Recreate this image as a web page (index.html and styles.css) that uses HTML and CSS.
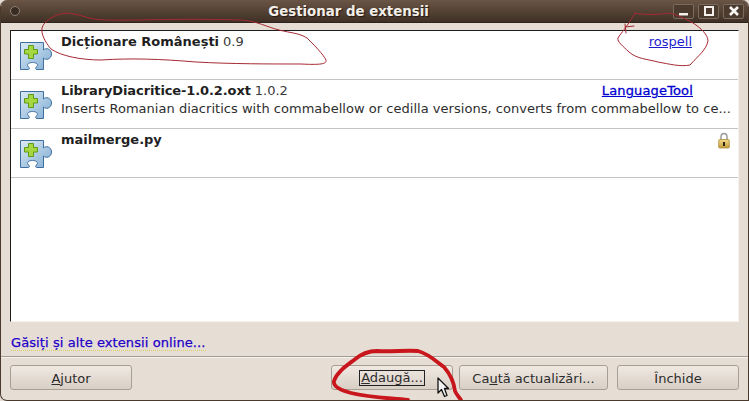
FILE: index.html
```html
<!DOCTYPE html>
<html lang="ro">
<head>
<meta charset="utf-8">
<title>Gestionar de extensii</title>
<link rel="stylesheet" href="styles.css">
</head>
<body>
<svg width="0" height="0" class="defs">
  <defs>
    <linearGradient id="pz" x1="0" y1="0" x2="1" y2="1">
      <stop offset="0" stop-color="#dcebf6"/>
      <stop offset="1" stop-color="#7fabd2"/>
    </linearGradient>
    <linearGradient id="lk" x1="0" y1="0" x2="0" y2="1">
      <stop offset="0" stop-color="#f2dc8a"/>
      <stop offset="1" stop-color="#c49a3a"/>
    </linearGradient>
    <symbol id="puzzle" viewBox="0 0 32 28">
      <path d="M.5 .5H23.500V8C25.500 5.500 31.500 6.500 31.500 12S25.500 18.500 23.500 16V27.500H16.500C15 27 15.500 25.500 17 24.500C18.500 22 16 20.500 12.500 20.500S6.500 22 8 24.500C9.500 25.500 10 27 8.500 27.500H.5Z" fill="url(#pz)" stroke="#3f6f9c" stroke-width="1"/>
      <path d="M8.500 3.500H13.500V7.500H17.500V12H13.500V16.500H8.500V12H4.500V7.500H8.500Z" fill="#a6d640" stroke="#5d9a18" stroke-width="1"/>
    </symbol>
  </defs>
</svg>
<div class="window">
  <header class="titlebar">
    <span class="wm-dot"></span>
    <h1 class="title">Gestionar de extensii</h1>
    <div class="wm-buttons">
      <span class="wm-btn"><svg width="12" height="12" viewBox="0 0 12 12"><rect x="1" y="8" width="9" height="2.500" fill="#f4f0ec"/></svg></span>
      <span class="wm-btn"><svg width="12" height="12" viewBox="0 0 12 12"><rect x="2" y="2" width="8" height="8" fill="none" stroke="#f4f0ec" stroke-width="2"/></svg></span>
      <span class="wm-btn"><svg width="12" height="12" viewBox="0 0 12 12"><path d="M2 2L10 10M10 2L2 10" stroke="#f8f6f2" stroke-width="2.600"/></svg></span>
    </div>
  </header>
  <main class="content">
    <div class="list">
      <div class="row">
        <svg class="puzzle"><use href="#puzzle"/></svg>
        <div class="info">
          <div class="line"><span class="name">Dicționare Românești</span> <span class="ver">0.9</span><a class="link link-plain" href="#">rospell</a></div>
        </div>
      </div>
      <div class="row">
        <svg class="puzzle"><use href="#puzzle"/></svg>
        <div class="info">
          <div class="line"><span class="name name-tight">LibraryDiacritice-1.0.2.oxt</span> <span class="ver">1.0.2</span><a class="link link-strong" href="#">LanguageTool</a></div>
          <div class="desc">Inserts Romanian diacritics with commabellow or cedilla versions, converts from commabellow to ce...</div>
        </div>
      </div>
      <div class="row">
        <svg class="puzzle"><use href="#puzzle"/></svg>
        <div class="info">
          <div class="line"><span class="name">mailmerge.py</span>
            <svg class="lock" width="12" height="17" viewBox="0 0 12 17">
              <path d="M3 8V5A3 3.500 0 0 1 9 5V8" fill="none" stroke="#9a9a98" stroke-width="1.500"/>
              <rect x=".7" y="7.500" width="10.600" height="8.500" rx="1" fill="url(#lk)" stroke="#a8842e" stroke-width=".7"/>
              <rect x="5" y="10" width="2" height="4" fill="#2a2416"/>
            </svg>
          </div>
        </div>
      </div>
    </div>
    <a class="online" href="#">Găsiți și alte extensii online...</a>
    <div class="divider"></div>
    <div class="buttons">
      <button class="btn btn-help"><u>A</u>jutor</button>
      <span class="spacer"></span>
      <button class="btn btn-add"><span class="focus"><u>A</u>daugă...</span></button>
      <button class="btn btn-update">Ca<u>u</u>tă actualizări...</button>
      <button class="btn btn-close">Închide</button>
    </div>
  </main>
  <svg class="ink" width="749" height="401" viewBox="0 0 749 401" fill="none" stroke-linejoin="round" stroke-linecap="round">
    <path class="thin" d="M64 13C72 13 78 15 88 18C100 21 120 20 140 20C170 19 210 19 240 20C256 21 266 27 278 30C290 33 298 33 306 38C314 46 322 54 325 60C326 64 320 65 300 64C270 64 230 64 195 62C160 59 130 58 100 60C80 60 60 56 50 49C44 42 40 34 41 28C43 21 52 15 64 13"/>
    <path class="thin" d="M634 13C642 15 655 15 667 13C676 14 684 19 692 23C700 28 707 35 707 41C705 50 698 55 689 65C680 67 668 64 657 62C646 59 636 59 628 52C622 46 616 42 617 38C620 33 626 27 634 13M624 27L633 26M624 24L625 33"/>
    <path class="thick" d="M407 400C390 398 370 398 350 393C338 390 332 386 333 381C336 372 345 366 353 360C360 354 367 351 376 351C390 352 405 350 417 351C428 354 436 362 443 367C450 375 453 383 454 391C455 394 458 397 460 400"/>
    <path class="cursor" d="M437 378V393L440.500 389.500L443.500 396.500L446 395.500L443.500 388.500H447.500Z"/>
  </svg>
</div>
</body>
</html>
```
FILE: styles.css
```css
* { box-sizing: border-box; }
html, body { margin: 0; padding: 0; background: #e6ded5; }
body { width: 749px; height: 401px; overflow: hidden; font-family: "DejaVu Sans", sans-serif; font-size: 13px; color: #2b2b2b; }
.defs { position: absolute; }
.window { position: relative; width: 749px; height: 401px; display: flex; flex-direction: column; background: #e6ded5; border-radius: 7px 7px 0 7px; border: 1px solid #4a3a2e; border-top: 0; overflow: hidden; }
.titlebar { flex: none; height: 23px; display: flex; align-items: center; padding: 0 4px 0 9px; background: linear-gradient(#6a5545, #3f3026); border-bottom: 1px solid #2f241c; }
.wm-dot { flex: none; width: 10px; height: 10px; border-radius: 50%; border: 1px solid #8d8378; background: #3a2c22; }
.title { flex: 1; margin: 0 0 0 4px; text-align: center; font-size: 13.330px; line-height: 17px; font-weight: bold; color: #f2eee8; text-shadow: 1px 1px 1px #221811; }
.wm-buttons { flex: none; display: flex; gap: 4px; }
.wm-btn { width: 21px; height: 15px; display: flex; align-items: center; justify-content: center; border: 1px solid #7b6b5d; border-radius: 2px; background: #4b3a2e; }
.content { flex: 1; min-height: 0; display: flex; flex-direction: column; padding: 7px 9px 9px; }
.list { height: 292px; flex: none; background: #fff; border-left: 1px solid #1d1d1d; border-top: 1px solid #1d1d1d; border-right: 1px solid #f6f3ef; border-bottom: 1px solid #f6f3ef; }
.row { height: 49px; display: flex; padding: 2px 0 0 9px; border-bottom: 1px solid #c4c4c4; }
.puzzle { flex: none; width: 32px; height: 28px; margin-top: 9px; margin-right: 9px; }
.info { flex: 1; min-width: 0; padding-right: 9px; }
.line { display: flex; align-items: baseline; gap: 4px; height: 18px; line-height: 17px; white-space: nowrap; }
.name { font-weight: bold; color: #1f1f1f; }
.name-tight { letter-spacing: -.11px; }
.ver { color: #3a3a3a; }
.link { margin-left: auto; margin-right: 36px; color: #1c1ccf; text-decoration: underline; }
.link-plain { margin-right: 37px; }
.link-strong { color: #0000d0; letter-spacing: .15px; -webkit-text-stroke: .3px #0000d0; }
.desc { white-space: nowrap; line-height: 17px; letter-spacing: .03px; color: #2e2e2e; }
.lock { margin-left: auto; margin-right: -1px; align-self: flex-start; margin-top: 1px; }
.online { margin-top: 13px; height: 16px; line-height: 16px; margin-left: 1px; font-size: 13px; letter-spacing: .09px; color: #2200c8; -webkit-text-stroke: .25px #2200c8; text-decoration: none; border-bottom: 1px dotted #d8d060; align-self: flex-start; }
.divider { margin: 5px -9px 0; height: 1px; background: #a29c94; box-shadow: 0 1px 0 #f6f2ee; flex: none; }
.buttons { display: flex; gap: 6px; margin-top: 8px; }
.spacer { flex: 1; }
.btn { height: 25px; padding: 1px 0 0; font: 13px "DejaVu Sans", sans-serif; color: #2c2c2c; border: 1px solid #a89f94; border-radius: 3px; background: linear-gradient(#f0e9e2, #d8cfc5); display: flex; align-items: center; justify-content: center; }
.btn-help { width: 122px; }
.btn-add { width: 122px; }
.btn-update { width: 149px; }
.btn-close { width: 122px; margin-left: 3px; }
.focus { border: 1px solid #222; padding: 0 1px; line-height: 14px; }
.ink { position: absolute; left: 0; top: 0; pointer-events: none; }
.thin { stroke: #a62a33; stroke-width: 1; }
.thick { stroke: #c8161c; stroke-width: 3.800; }
.cursor { fill: #f2f2f2; stroke: #111; stroke-width: 1.300; }
```
